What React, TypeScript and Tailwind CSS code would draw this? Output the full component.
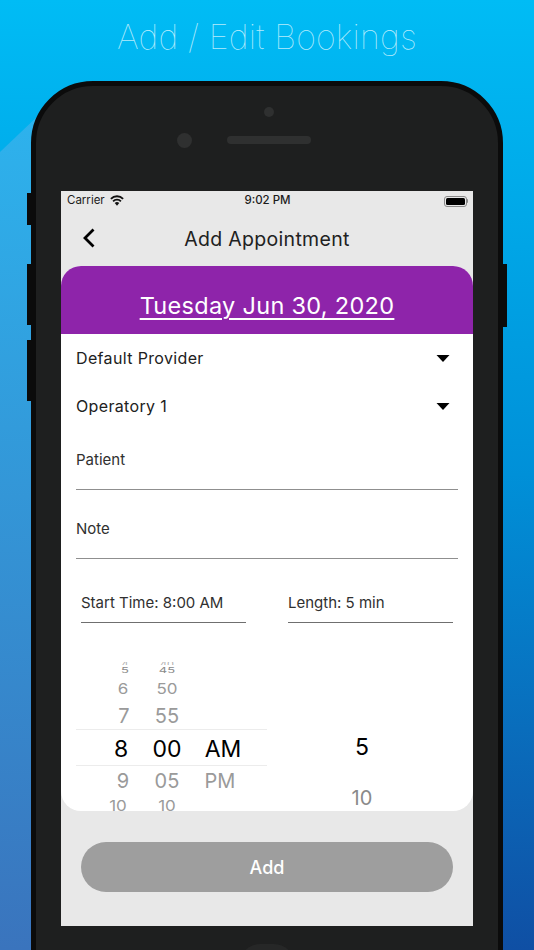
import React from "react";

function Caret() {
  return (
    <svg width="14" height="7" viewBox="0 0 14 7" className="shrink-0">
      <path d="M0.5 0H13.5L7 7Z" fill="#000" />
    </svg>
  );
}

const rowClasses = [
  "h-[3px] overflow-hidden text-[11px] leading-[12px] text-[#b0b0b0]",
  "mt-[1px] h-[10px] scale-y-[0.6] text-[13px] text-[#8a8a8a]",
  "mt-[3px] h-[22px] scale-y-[0.85] text-[17px] text-[#9a9a9a]",
  "h-[30px] text-[20px] text-[#9a9a9a]",
  "h-[36px] text-[23px] text-black",
  "h-[28px] text-[20px] text-[#9a9a9a]",
  "h-[24px] scale-y-[0.85] text-[17px] text-[#9a9a9a]",
];

function Column({ values, className, nudges }: { values: string[]; className: string; nudges?: string[] }) {
  return (
    <div className={`flex flex-col pt-[39px] ${className}`}>
      {values.map((v, i) => (
        <div key={i} className={`flex shrink-0 items-center justify-center ${rowClasses[i]} ${nudges ? nudges[i] : ""}`}>
          {v}
        </div>
      ))}
    </div>
  );
}

export default function App() {
  return (
    <div className="relative h-[950px] w-[534px] overflow-hidden bg-gradient-to-b from-[#00bcf5] via-[#0090d8] to-[#0f4fa4] font-['Inter',sans-serif]">
      <svg className="absolute inset-0" width="534" height="950" viewBox="0 0 534 950">
        <defs>
          <linearGradient id="ov" x1="0" y1="0" x2="0" y2="1">
            <stop offset="0" stopColor="#2db4ee" />
            <stop offset="1" stopColor="#3a74bd" />
          </linearGradient>
        </defs>
        <polygon points="0,152 60,95 60,950 0,950" fill="url(#ov)" />
      </svg>

      <div className="relative flex flex-col items-center pt-[15px]">
        <h1 className="h-[66px] text-center text-[34px] leading-[44px] font-thin tracking-[0.15px] text-[#b4ebfc]">
          Add / Edit Bookings
        </h1>

        <div className="relative h-[1000px] w-[472px] rounded-t-[62px] border-[5px] border-[#0b0b0b] bg-[#1e1f1f] pt-[105px] pl-[25px]">
          <div className="absolute top-[107px] left-[-9px] h-[32px] w-[5px] bg-[#0b0b0b]" />
          <div className="absolute top-[178px] left-[-9px] h-[61px] w-[5px] bg-[#0b0b0b]" />
          <div className="absolute top-[254px] left-[-9px] h-[61px] w-[5px] bg-[#0b0b0b]" />
          <div className="absolute top-[178px] right-[-9px] h-[63px] w-[5px] bg-[#0b0b0b]" />
          <div className="absolute top-[21px] left-[228px] size-[10px] rounded-full bg-[#2f3030]" />
          <div className="absolute top-[47px] left-[141px] size-[15px] rounded-full bg-[#2f3030]" />
          <div className="absolute top-[50px] left-[191px] h-[8px] w-[84px] rounded-full bg-[#2f3030]" />

          <div className="flex h-[735px] w-[412px] flex-col bg-[#e8e8e8]">
            <div className="flex h-[20px] shrink-0 items-center justify-between pr-[5px] pl-[6px] text-[11.5px] text-[#1c1c1c]">
              <div className="flex w-[120px] items-center gap-[5px]">
                <span>Carrier</span>
                <svg width="14" height="11" viewBox="0 0 14 11" className="-translate-y-[1px]">
                  <path d="M7 10.8 4.7 8.1a3.2 3.2 0 0 1 4.6 0Z" fill="#111" />
                  <path d="M3.1 6.3a5.4 5.4 0 0 1 7.8 0" fill="none" stroke="#111" strokeWidth="1.9" />
                  <path d="M.9 3.9a8.5 8.5 0 0 1 12.2 0" fill="none" stroke="#111" strokeWidth="1.9" />
                </svg>
              </div>
              <span className="font-medium">9:02 PM</span>
              <div className="flex w-[120px] items-center justify-end">
                <div className="flex h-[11px] w-[23px] items-center rounded-[3px] border border-[#8a8a8a] p-[1px]">
                  <div className="h-full w-full rounded-[1.5px] bg-black" />
                </div>
                <div className="h-[4px] w-[1.5px] rounded-r-full bg-[#8a8a8a]" />
              </div>
            </div>

            <div className="relative flex h-[55px] shrink-0 items-center justify-center pt-[2px] text-[19.5px] tracking-[0.3px] text-[#212121]">
              <svg className="absolute top-[17px] left-[20px]" width="15" height="20" viewBox="0 0 15 20">
                <path d="M12.5 1.5 4 10l8.5 8.5" fill="none" stroke="#000" strokeWidth="2.8" />
              </svg>
              Add Appointment
            </div>

            <div className="flex h-[545px] shrink-0 flex-col overflow-hidden rounded-[20px] bg-white">
              <div className="flex h-[68px] shrink-0 items-center justify-center bg-[#8e24aa] pt-[12px] text-[23.5px] tracking-[0.3px] text-white underline underline-offset-[4px]">
                Tuesday Jun 30, 2020
              </div>

              <div className="flex h-[48px] shrink-0 items-center justify-between pr-[23px] pl-[15px] text-[16px] tracking-[0.35px] text-[#212121]">
                Default Provider <Caret />
              </div>
              <div className="flex h-[48px] shrink-0 items-center justify-between pr-[23px] pl-[15px] text-[16px] tracking-[0.35px] text-[#212121]">
                Operatory 1 <Caret />
              </div>

              <div className="mx-[15px] mt-[10px] h-[50px] shrink-0 border-b border-[#8f8f8f] pt-[10px] text-[15px] leading-[20px] text-[#303030]">
                Patient
              </div>
              <div className="mx-[15px] mt-[19px] h-[50px] shrink-0 border-b border-[#8f8f8f] pt-[10px] text-[15px] leading-[20px] text-[#303030]">
                Note
              </div>

              <div className="mt-[31px] flex shrink-0 justify-between px-[20px] text-[15px] text-[#303030]">
                <div className="h-[33px] w-[165px] border-b border-[#6f6f6f] leading-[26px]">Start Time: 8:00 AM</div>
                <div className="h-[33px] w-[165px] border-b border-[#6f6f6f] leading-[26px]">Length: 5 min</div>
              </div>

              <div className="flex min-h-0 flex-1">
                <div className="relative ml-[15px] flex w-[191px] overflow-hidden pl-[25px]">
                  <div className="absolute top-[106px] right-0 left-0 h-[37px] border-y border-[#ececec]" />
                  <Column
                    className="w-[44px]"
                    values={["4", "5", "6", "7", "8", "9", "10"]}
                    nudges={["ml-[4px]", "ml-[4px]", "", "ml-[2px]", "mr-[4px]", "", "mr-[10px]"]}
                  />
                  <Column className="w-[44px]" values={["40", "45", "50", "55", "00", "05", "10"]} />
                  <Column
                    className="w-[66px]"
                    values={["\u00a0", "\u00a0", "\u00a0", "\u00a0", "AM", "PM", "\u00a0"]}
                    nudges={["", "", "", "", "ml-[2px]", "mr-[4px]", ""]}
                  />
                </div>
                <div className="flex flex-1 flex-col items-center pt-[106px] pr-[16px]">
                  <div className="flex h-[36px] items-center text-[23px] text-black">5</div>
                  <div className="mt-[20px] flex h-[26px] items-center text-[20px] text-[#8a8a8a]">10</div>
                </div>
              </div>
            </div>

            <div className="mx-[20px] mt-[31px] flex h-[50px] shrink-0 items-center justify-center rounded-full bg-[#9e9e9e] text-[18px] font-medium text-white">
              Add
            </div>
          </div>

          <div className="mt-[18px] ml-[179px] h-[40px] w-[54px] rounded-full bg-[#262727]" />
        </div>
      </div>
    </div>
  );
}
